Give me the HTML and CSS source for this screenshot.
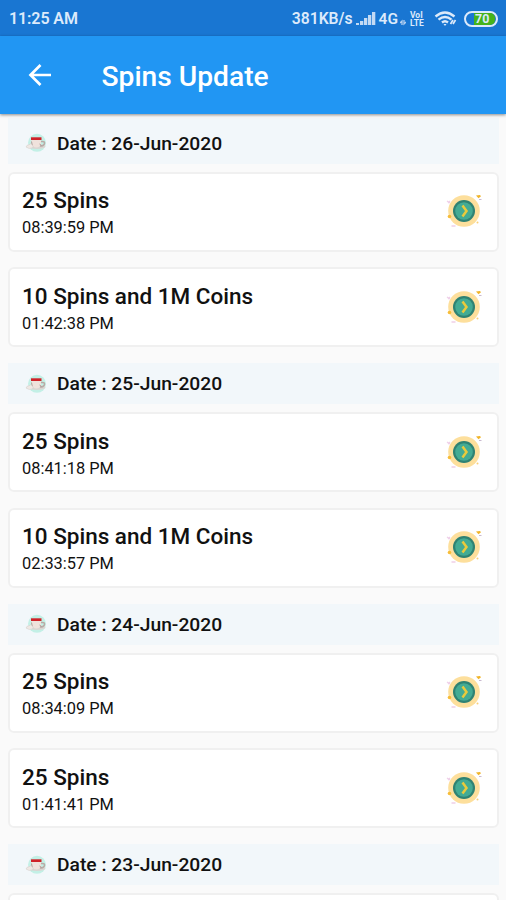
FILE: index.html
```html
<!DOCTYPE html>
<html lang="en">
<head>
<meta charset="utf-8">
<title>Spins Update</title>
<link rel="stylesheet" href="styles.css">
</head>
<body>
<svg class="defs" aria-hidden="true">
  <symbol id="cup" viewBox="0 0 22 20">
    <circle cx="12" cy="9.800" r="9" fill="#c3f0e6"/>
    <ellipse cx="12" cy="13.500" rx="8.500" ry="2.600" fill="#d9d5d2"/>
    <path d="M6.500 5h9.500v5q-1 4.500-4.700 4.500t-4.800-4.500z" fill="#efe2dc"/>
    <path d="M16 8.500q4-.5 3.500 2t-4.500 2.500" fill="none" stroke="#b9aaa6" stroke-width="1.500"/>
    <path d="M6 4.300h10.500v2.700h-10.500z" fill="#cf2229"/>
    <path d="M6.500 8.500l.8 4M14.500 11l2 1.500" stroke="#b39d99" stroke-width="1"/>
    <path d="M1 14q1-2.500 3-2.200 1.500-2 3 0 2 1.200.5 3-3.500 1.700-6.500-.8z" fill="#efe9e5" stroke="#cfc8c4" stroke-width=".5"/>
  </symbol>
  <symbol id="coin" viewBox="0 0 38 38">
    <circle cx="19" cy="20" r="15.800" fill="#fddf9c"/>
    <circle cx="19" cy="20" r="11" fill="#2f8273"/>
    <circle cx="19" cy="20" r="8.800" fill="#43ab94"/>
    <path d="M17.500 14.500l4 5.500-4 5.500" fill="none" stroke="#e9ca3c" stroke-width="2.500"/>
    <path d="M31 4.500l4-.6 1 1.300-2.500 2z" fill="#f0b429"/>
    <path d="M34 8.500h2.500" stroke="#c9b9cf" stroke-width="1"/>
    <circle cx="4.500" cy="25.500" r="1.800" fill="#f7bd3a"/>
    <circle cx="32.500" cy="31.500" r="1" fill="#f8cf77"/>
    <path d="M2 10l3 2M5 10l-2 2M6.500 35h4" stroke="#efcfe8" stroke-width="1.300"/>
  </symbol>
</svg>
<div class="statusbar">
  <span class="clock">11:25 AM</span>
  <span class="speed">381KB/s</span>
  <svg class="signal" viewBox="0 0 20 15" fill="#c3daf4"><path d="M0 12h3v2H0zM4 10h3.300v4H4zM8 7h3.300v7H8zM12 4h3.300v10H12zM16 1h3.300v13H16z"/></svg>
  <span class="net">4G</span>
  <svg class="arrows" viewBox="0 0 6 8" fill="none" stroke="#b5d0f0" stroke-width="1.300"><path d="M2 7V3L0 5M4 2v4l2-2"/></svg>
  <span class="volte">VoI<br>LTE</span>
  <svg class="wifi" viewBox="0 0 24 18" fill="none" stroke="#dceafa" stroke-width="2.300"><path d="M1.500 6.500q9.500-8 19 0M4.500 9.700q6.500-5.500 13 0M8 12.500q3-2.500 6 0"/><path d="M9.500 14h3l-1.500 2z" fill="#dceafa" stroke="none"/><path d="M16.500 14l2.500-4M19 14l2.500-4" stroke-width="1.700"/></svg>
  <span class="battery"><span class="level">70</span></span>
</div>
<header class="appbar">
  <svg class="back" viewBox="0 0 24 22" fill="none" stroke="#fff" stroke-width="2.700"><path d="M23 11H3M12.500 1L2.500 11l10 10"/></svg>
  <h1>Spins Update</h1>
</header>
<main class="list">
  <section class="current">
    <div class="date"><svg class="cup"><use href="#cup"/></svg><h2>Date : 26-Jun-2020</h2></div>
    <div class="card"><div><h3>25 Spins</h3><p>08:39:59 PM</p></div><svg class="coin"><use href="#coin"/></svg></div>
    <div class="card"><div><h3>10 Spins and 1M Coins</h3><p>01:42:38 PM</p></div><svg class="coin"><use href="#coin"/></svg></div>
  </section>
  <section>
    <div class="date"><svg class="cup"><use href="#cup"/></svg><h2>Date : 25-Jun-2020</h2></div>
    <div class="card"><div><h3>25 Spins</h3><p>08:41:18 PM</p></div><svg class="coin"><use href="#coin"/></svg></div>
    <div class="card"><div><h3>10 Spins and 1M Coins</h3><p>02:33:57 PM</p></div><svg class="coin"><use href="#coin"/></svg></div>
  </section>
  <section>
    <div class="date"><svg class="cup"><use href="#cup"/></svg><h2>Date : 24-Jun-2020</h2></div>
    <div class="card"><div><h3>25 Spins</h3><p>08:34:09 PM</p></div><svg class="coin"><use href="#coin"/></svg></div>
    <div class="card"><div><h3>25 Spins</h3><p>01:41:41 PM</p></div><svg class="coin"><use href="#coin"/></svg></div>
  </section>
  <section>
    <div class="date"><svg class="cup"><use href="#cup"/></svg><h2>Date : 23-Jun-2020</h2></div>
    <div class="card"></div>
  </section>
</main>
</body>
</html>
```
FILE: styles.css
```css
* { box-sizing: border-box; }
body {
  margin: 0;
  height: 900px;
  overflow: hidden;
  display: flex;
  flex-direction: column;
  background: #fafafa;
  color: #111;
  font-family: Roboto, sans-serif;
}
h1, h2, h3, p { margin: 0; font-weight: 500; white-space: nowrap; }
.defs { display: none; }
svg { display: block; flex: none; }

.statusbar {
  flex: none;
  display: flex;
  align-items: center;
  height: 36px;
  padding: 1px 8px 0 9px;
  background: #1976d2;
  color: #dceafb;
  font-size: 16px;
  font-weight: 600;
  white-space: nowrap;
}
.clock { letter-spacing: -.1px; }
.speed { margin-left: auto; font-size: 15.700px; }
.signal { width: 20px; height: 15px; margin-left: 3px; }
.net { margin-left: 3px; font-size: 15.500px; }
.arrows { width: 6px; height: 8px; margin: 6px 0 0 2px; }
.volte {
  width: 16px;
  margin-left: 4px;
  font-size: 8.500px;
  line-height: 8px;
  font-weight: 700;
}
.wifi { width: 24px; height: 18px; margin-left: 8px; }
.battery {
  width: 34px;
  height: 16px;
  margin-left: 6px;
  padding: 0 1px;
  border: 2px solid #dceafb;
  border-radius: 8px;
}
.level {
  display: block;
  margin-left: 7px;
  border-radius: 0 5px 5px 0;
  background: #45b31b;
  font-size: 12.500px;
  line-height: 12px;
  font-weight: 700;
  text-indent: 1px;
}

.appbar {
  flex: none;
  position: relative;
  display: flex;
  align-items: center;
  height: 78px;
  padding: 3px 28px 0;
  gap: 49.500px;
  background: #2196f3;
  color: #fff;
  box-shadow: 0 1px 3px rgba(0, 0, 0, .45);
}
.back { width: 24px; height: 22px; margin-top: -3px; }
h1 { font-size: 28.200px; line-height: 32px; }

.list { flex: 1; min-height: 0; overflow: hidden; padding: 3.500px 7px 0 8px; }
section { height: 240.500px; }
.date {
  display: flex;
  align-items: center;
  height: 41px;
  padding-left: 17px;
  margin-bottom: 8px;
  gap: 10px;
  background: #f2f7fa;
}
.current { height: 245.500px; }
.current .date { height: 46px; padding-top: 5px; }
.cup { width: 22px; height: 20px; }
h2 { font-size: 19.250px; line-height: 24px; padding-top: 1px; }
.card {
  display: flex;
  align-items: center;
  justify-content: space-between;
  height: 80px;
  margin-bottom: 15.700px;
  padding: 0 14px 0 12px;
  background: #fff;
  border: 2px solid #f0f0f0;
  border-radius: 6px;
}
h3 { font-size: 22.500px; line-height: 28px; padding: 3px 0 1px; }
p { font-size: 16.400px; line-height: 25px; font-weight: 400; }
.coin { width: 38px; height: 38px; margin-top: -3px; }
```
